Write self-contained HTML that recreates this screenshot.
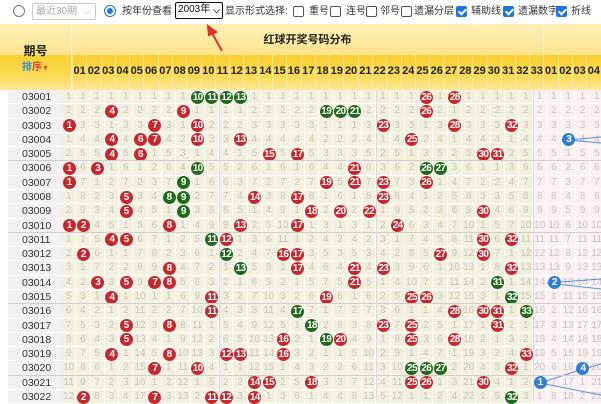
<!DOCTYPE html>
<html><head><meta charset="utf-8">
<style>
*{margin:0;padding:0;box-sizing:border-box}
body{width:601px;height:401px;overflow:hidden;background:#fff;font-family:"Liberation Sans","Noto Sans CJK SC",sans-serif;position:relative}
.a{position:absolute}
.top{font-size:10px;color:#333;white-space:nowrap;line-height:14px}
.c{position:absolute;height:14.286px;border-right:1px solid #fff;border-bottom:1px solid #fff;font-size:10px;color:#c4c4c4;text-align:center;line-height:14px;font-family:"Liberation Sans",sans-serif}
.b{position:absolute;width:13px;height:13px;border-radius:50%;color:#fff;font-weight:bold;font-size:10px;line-height:13px;text-align:center;letter-spacing:-0.6px;font-family:"Liberation Sans",sans-serif}
.r{background:#c9262d}.g{background:#1f6b1b}.bl{background:#2f7fd6}
.p{position:absolute;left:8px;width:54px;height:14.286px;background:#f1f1f1;border-bottom:1px solid #fff;font-size:10.5px;color:#333;line-height:14px;padding-left:14px}
.h{position:absolute;top:55px;height:35px;font-size:11px;font-weight:bold;color:#222;text-align:center;line-height:32px;border-left:1px solid rgba(255,255,255,.45)}
.cb{position:absolute;top:6px;width:11px;height:11px;border:1px solid #555;border-radius:2px;background:#fff}
.ck{background:#1a73e8;border-color:#1a73e8}
.ck:after{content:"";position:absolute;left:3px;top:0px;width:3px;height:6px;border:solid #fff;border-width:0 2px 2px 0;transform:rotate(45deg)}
</style></head><body>
<!-- top bar -->
<div class="a" style="left:13px;top:5px;width:12px;height:12px;border:1px solid #777;border-radius:50%"></div>
<div class="a top" style="left:32px;top:3px;width:64px;height:17px;border:1px solid #ccc;border-radius:2px;color:#aaa;padding-left:3px;line-height:15px">最近30期<span style="position:absolute;right:5px;font-size:9px">⌵</span></div>
<div class="a" style="left:104px;top:5px;width:12px;height:12px;border:1px solid #1a73e8;border-radius:50%"><div style="margin:2px;width:6px;height:6px;border-radius:50%;background:#1a73e8"></div></div>
<div class="a top" style="left:122px;top:5px">按年份查看</div>
<div class="a top" style="left:175px;top:2px;width:48px;height:17px;border:1.5px solid #111;border-radius:2px;color:#111;padding-left:2px;line-height:14px">2003年<span style="position:absolute;right:2px;font-weight:bold;font-size:9px">⌵</span></div>
<div class="a top" style="left:225px;top:5px">显示形式选择:</div>
<span class="cb a" style="left:293px"></span><div class="a top" style="left:309px;top:5px">重号</div>
<span class="cb a" style="left:330px"></span><div class="a top" style="left:346px;top:5px">连号</div>
<span class="cb a" style="left:366px"></span><div class="a top" style="left:380px;top:5px">邻号</div>
<span class="cb a" style="left:401px"></span><div class="a top" style="left:414px;top:5px">遗漏分层</div>
<span class="cb a ck" style="left:456px"></span><div class="a top" style="left:471px;top:5px">辅助线</div>
<span class="cb a ck" style="left:503px"></span><div class="a top" style="left:518px;top:5px">遗漏数字</div>
<span class="cb a ck" style="left:556px"></span><div class="a top" style="left:571px;top:5px">折线</div>
<!-- header -->
<div class="a" style="left:0;top:24px;width:601px;height:31px;background:linear-gradient(#fdefb5,#fce490)"></div>
<div class="a" style="left:0;top:55px;width:601px;height:35px;background:linear-gradient(#f9d02e,#fbda55 60%,#fde79a)"></div>
<div class="a" style="left:71px;top:24px;width:1px;height:66px;background:rgba(255,255,255,.6)"></div>
<div class="a" style="left:543px;top:24px;width:1px;height:31px;background:rgba(255,255,255,.7)"></div>
<div class="a" style="left:0;top:42px;width:71px;text-align:center;font-size:12px;font-weight:bold;color:#222">期号</div>
<div class="a" style="left:0;top:58px;width:71px;text-align:center;font-size:10px;font-weight:bold"><span style="color:#2a8fd8">排</span><span style="color:#d43">序</span><span style="color:#d43;font-size:7px">▼</span></div>
<div class="a" style="left:72px;top:31px;width:471px;text-align:center;font-size:11px;font-weight:bold;color:#222">红球开奖号码分布</div>
<div id="hd"></div>
<div id="bd"></div>
<svg class="a" style="left:0;top:0" width="601" height="401">
<g stroke="#5b8fd6" stroke-width="1" fill="none">
<line x1="568" y1="140" x2="601" y2="137"/><line x1="568" y1="140" x2="601" y2="143"/>
<line x1="547" y1="283" x2="601" y2="279"/><line x1="547" y1="283" x2="601" y2="289"/>
<line x1="583" y1="369" x2="601" y2="364"/><line x1="583" y1="369" x2="540" y2="383"/>
<line x1="540" y1="383" x2="601" y2="395"/>
</g>
<g stroke="#e0302a" stroke-width="2" fill="#e0302a">
<line x1="222" y1="51" x2="212" y2="33"/><polygon points="208,26 216,32 209,35"/>
</g>
</svg>
<div id="bb"></div>
<script>
var W=14.286,RH=14.286,T0=90;
var hd='';
for(var i=0;i<38;i++){var x=72+i*W;hd+='<div class="h" style="left:'+x+'px;width:'+W+'px">'+String(i<33?i+1:i-32).padStart(2,'0')+'</div>';}
document.getElementById('hd').innerHTML=hd;
var R=[[10,11,12,13,26,28],[4,9,19,20,21,26],[1,7,10,23,28,32],[4,6,7,10,13,25],[4,6,15,17,30,31],[1,3,10,21,26,27],[1,9,19,21,23,26],[5,8,9,14,17,23],[5,9,18,20,22,30],[1,2,8,13,17,24],[4,5,11,12,30,32],[2,12,16,17,27,30],[8,13,17,21,23,32],[3,5,7,8,21,31],[4,11,19,25,26,32],[11,17,28,30,31,33],[5,8,18,23,25,31],[5,16,19,20,25,28],[4,8,12,13,16,33],[7,10,25,26,27,32],[14,15,18,25,26,30],[2,7,11,12,14,32]];
var G=[[10,11,12,13],[19,20,21],[],[],[],[10,26,27],[9],[8,9],[9],[],[11],[12],[13],[31],[32],[17,33],[18],[19],[],[25,26,27],[],[32]];
var B=[0,0,0,3,0,0,0,0,0,0,0,0,0,2,0,0,0,0,0,4,1,0];
var om=[],ob=[];for(var i=0;i<34;i++)om[i]=0;for(var i=0;i<17;i++)ob[i]=0;
var bd='',bb='';
for(var r=0;r<22;r++){var y=T0+r*RH;
bd+='<div class="p" style="top:'+y+'px">'+('030'+String(r+1).padStart(2,'0'))+'</div>';
for(var c=1;c<=33;c++){var x=62+(c-1)*W;var hit=R[r].indexOf(c)>=0;om[c]=hit?0:om[c]+1;
var bg=(c>=23&&c<=33)?'#f2f0db':'#f3f1de';
bd+='<div class="c" style="left:'+x+'px;top:'+y+'px;width:'+W+'px;background:'+bg+'">'+(hit?'':om[c])+'</div>';
if(hit)bb+='<div class="b '+(G[r].indexOf(c)>=0?'g':'r')+'" style="left:'+(x+0.6)+'px;top:'+(y+0.6)+'px">'+c+'</div>';}
for(var c=1;c<=6;c++){var x=533+(c-1)*W;var hit=B[r]==c;ob[c]=hit?0:ob[c]+1;
bd+='<div class="c" style="left:'+x+'px;top:'+y+'px;width:'+W+'px;background:#fbf0f1">'+(hit?'':ob[c])+'</div>';
if(hit)bb+='<div class="b bl" style="left:'+(x+0.6)+'px;top:'+(y+0.6)+'px">'+c+'</div>';}
if(r%5==4)bd+='<div class="a" style="left:8px;top:'+(y+RH-1)+'px;width:593px;height:1px;background:#cfcfcf;z-index:2"></div>';
}
bd+='<div class="a" style="left:219px;top:90px;width:1px;height:311px;background:#d8d6e8;z-index:2"></div>';
bd+='<div class="a" style="left:376px;top:90px;width:1px;height:311px;background:#d8d6e8;z-index:2"></div>';
bd+='<div class="a" style="left:533px;top:90px;width:1px;height:311px;background:#d8d6e8;z-index:2"></div>';
document.getElementById('bd').innerHTML=bd;document.getElementById('bb').innerHTML=bb;
</script>
</body></html>
